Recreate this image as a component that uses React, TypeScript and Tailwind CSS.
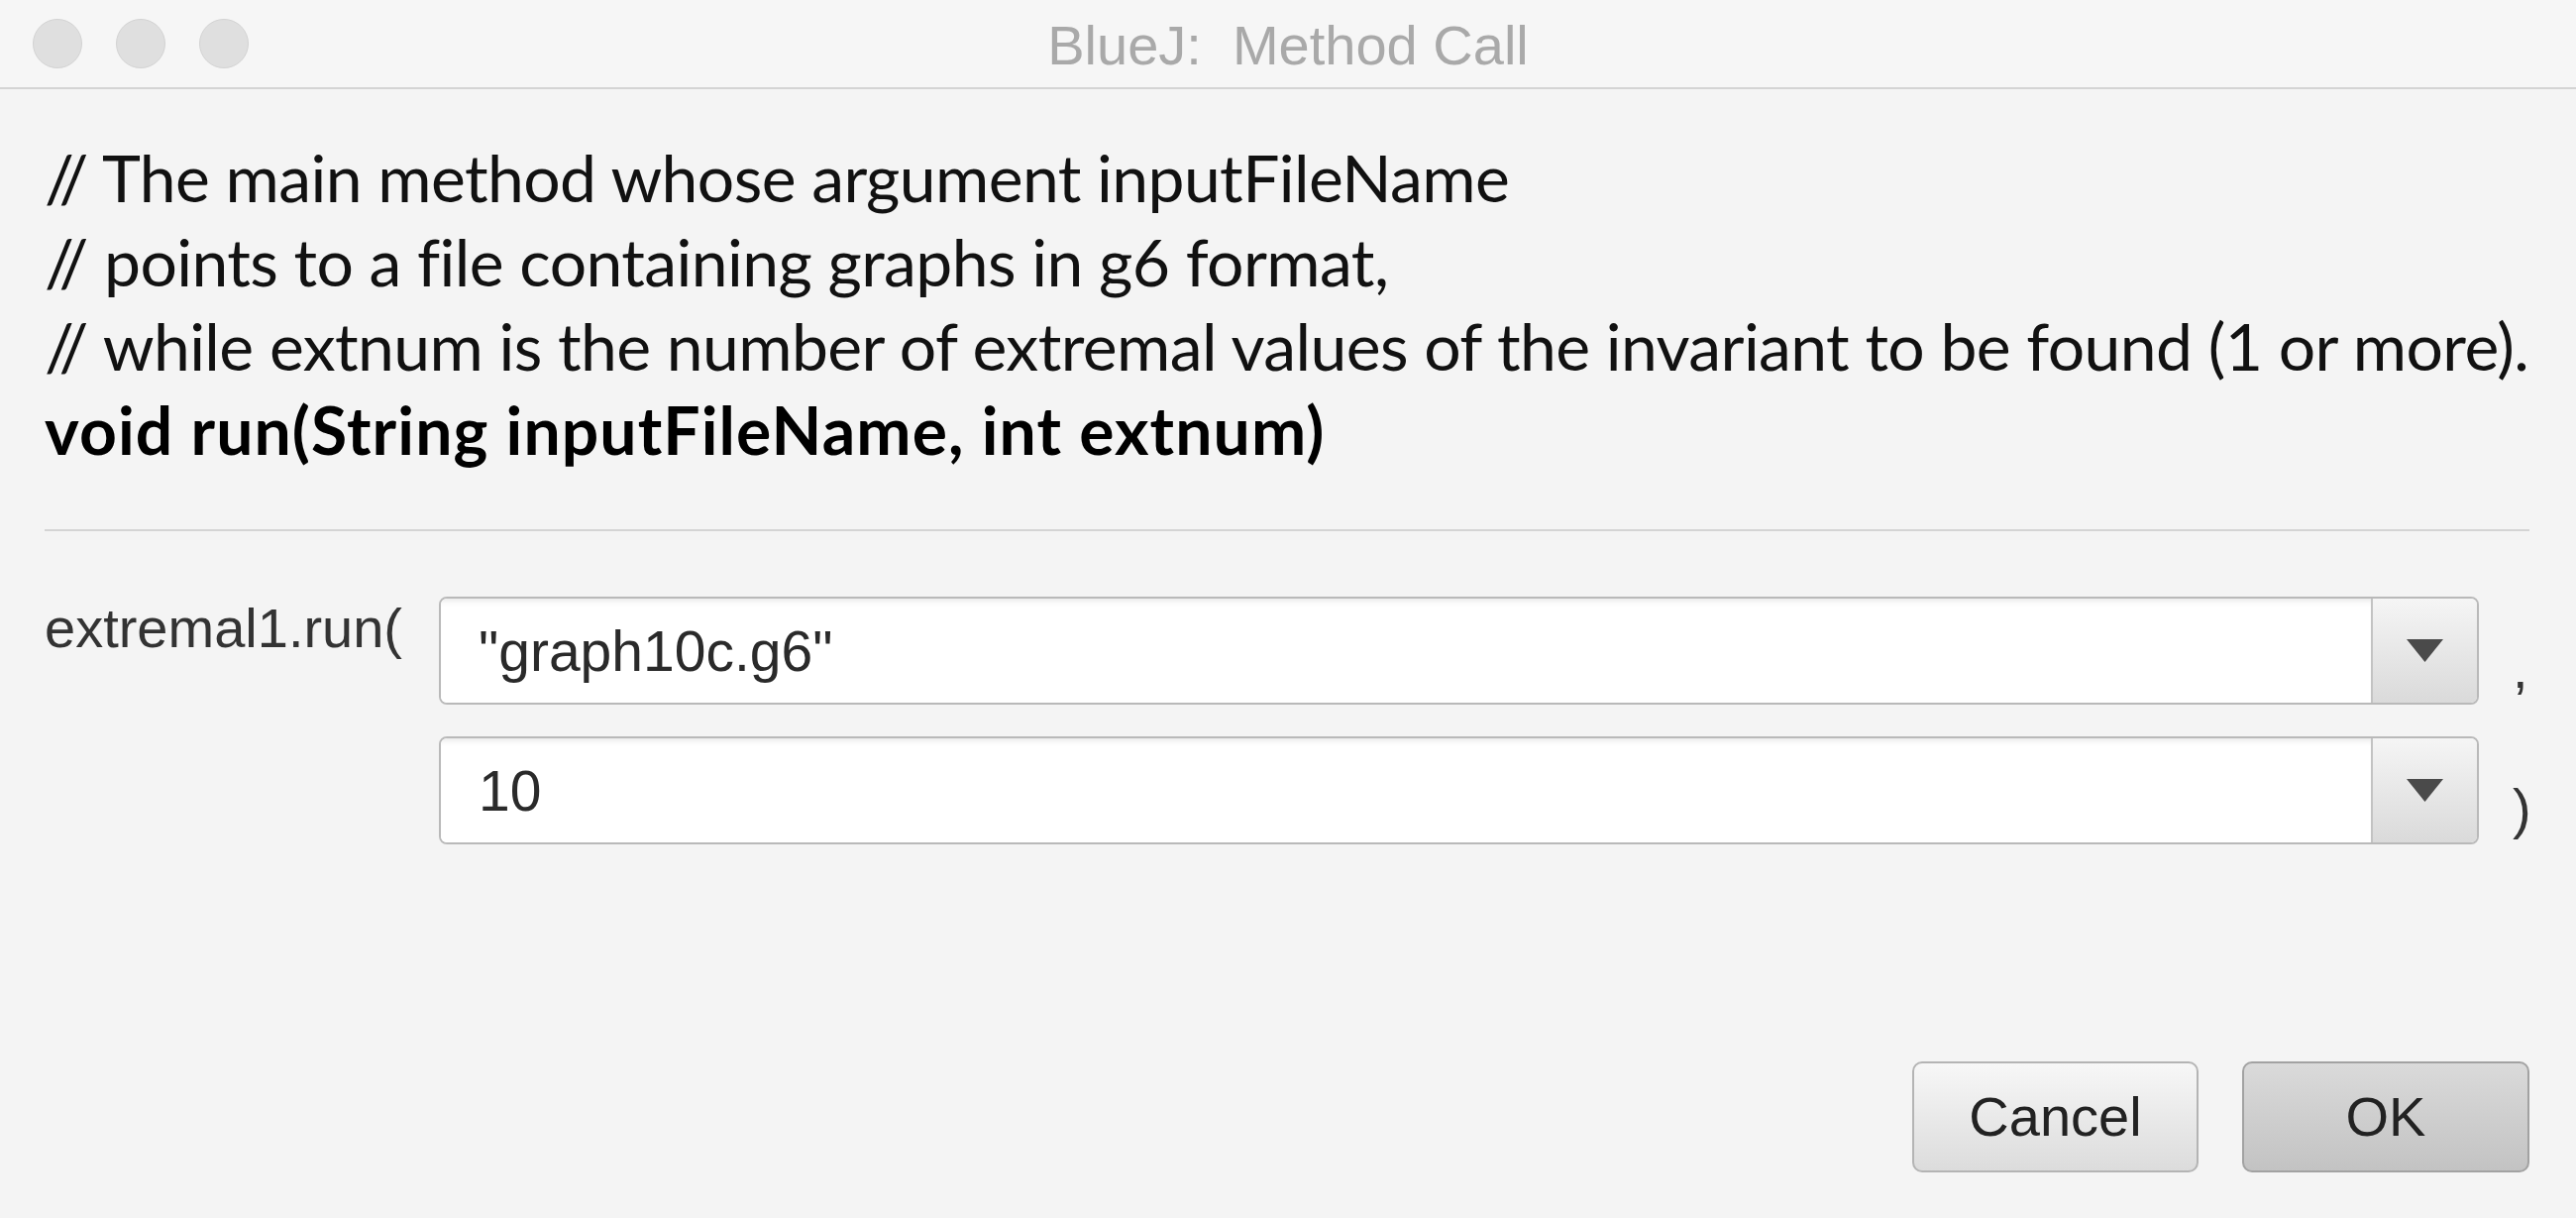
import { ReactNode } from 'react';

const sans = { fontFamily: '"Liberation Sans", Arial, sans-serif' };

function Caret() {
    return (
        <svg width="37" height="23" viewBox="0 0 37 23">
            <polygon points="0,0 37,0 18.5,23" fill="#4a4a4a" />
        </svg>
    );
}

function ComboBox({ value }: { value: string }) {
    return (
        <div className="flex h-[109px] overflow-hidden rounded-[8px] border-2 border-[#b9b9b9] bg-white">
            <div className="flex flex-1 items-center bg-white pl-[38px] text-[57px] leading-[56px] text-[#2a2a2a] shadow-[inset_0_7px_6px_-5px_rgba(0,0,0,0.10)]">
                {value}
            </div>
            <div className="flex w-[107px] items-center justify-center border-l-2 border-[#c3c3c3] bg-gradient-to-b from-[#f5f5f5] to-[#dadada]">
                <Caret />
            </div>
        </div>
    );
}

function Trail({ children }: { children: ReactNode }) {
    return <div className="self-end mb-[8px] pl-[34px] text-[56px] leading-[56px] text-[#333]">{children}</div>;
}

export default function App() {
    return (
        <div className="flex h-screen w-full flex-col bg-[#f4f4f4]" style={sans}>
            {/* title bar */}
            <div className="grid h-[90px] grid-cols-[1fr_auto_1fr] items-center border-b-2 border-[#d4d4d4] bg-[#f6f6f6]">
                <div className="flex items-center gap-[34px] pl-[33px]">
                    <div className="h-[50px] w-[50px] rounded-full border border-[#d3d3d3] bg-[#dfdfdf]" />
                    <div className="h-[50px] w-[50px] rounded-full border border-[#d3d3d3] bg-[#dfdfdf]" />
                    <div className="h-[50px] w-[50px] rounded-full border border-[#d3d3d3] bg-[#dfdfdf]" />
                </div>
                <div className="mt-[4px] text-[56px] leading-[56px] text-[#a9a9a9]">BlueJ:&nbsp; Method Call</div>
                <div />
            </div>

            <div className="flex flex-1 flex-col pb-[46px] pl-[45px] pr-[47px] pt-[46px]">
                <div
                    className="text-[66px] leading-[85px] tracking-[-0.6px] text-[#111]"
                    style={{ fontFamily: 'Lato, "Open Sans", sans-serif' }}
                >
                    <div>// The main method whose argument inputFileName</div>
                    <div>// points to a file containing graphs in g6 format,</div>
                    <div>// while extnum is the number of extremal values of the invariant to be found (1 or more).</div>
                    <div className="font-bold tracking-[1.1px] text-black">void run(String inputFileName, int extnum)</div>
                </div>

                <div className="mt-[58px] h-[2px] bg-[#d4d4d4]" />

                <div className="mt-[66px] grid grid-cols-[398px_1fr_51px] gap-y-[32px]">
                    <div className="mt-[4px] self-start text-[56px] leading-[56px] text-[#333]">extremal1.run(</div>
                    <ComboBox value={'"graph10c.g6"'} />
                    <Trail>,</Trail>

                    <div />
                    <ComboBox value="10" />
                    <Trail>)</Trail>
                </div>

                <div className="mt-auto flex justify-end gap-[44px]">
                    <button className="h-[112px] w-[289px] rounded-[10px] border-2 border-[#b4b4b4] bg-gradient-to-b from-[#f7f7f7] to-[#dcdcdc] text-[56px] leading-[56px] text-[#222]">
                        Cancel
                    </button>
                    <button className="h-[112px] w-[290px] rounded-[10px] border-2 border-[#a2a2a2] bg-gradient-to-b from-[#dadada] to-[#c3c3c3] text-[56px] leading-[56px] text-[#222]">
                        OK
                    </button>
                </div>
            </div>
        </div>
    );
}
